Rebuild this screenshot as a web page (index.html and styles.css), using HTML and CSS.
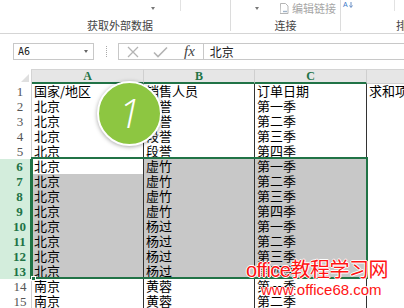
FILE: index.html
```html
<!DOCTYPE html>
<html lang="zh-CN">
<head>
    <meta charset="UTF-8">
    <title>数据透视 - 选择区域</title>
    <link rel="stylesheet" href="styles.css">
</head>
<body>
    <div class="window">
        <!-- 功能区 -->
        <div class="ribbon">
            <div class="group group-data">
                <div class="tools">
                    <span class="caret"></span>
                    <span class="mini-sep"></span>
                </div>
                <div class="group-label">获取外部数据</div>
            </div>
            <div class="group group-conn">
                <div class="tools">
                    <span class="caret"></span>
                    <svg class="doc-icon" width="9" height="11" viewBox="0 0 9 11">
                        <path d="M0.5 0.5h5l2.5 2.5v7.5h-8z" fill="#fff" stroke="#b5b5b5"/>
                        <path d="M3 8.5h4" stroke="#9fb3c8" stroke-width="1.4"/>
                    </svg>
                    <span class="tool-text">编辑链接</span>
                </div>
                <div class="group-label">连接</div>
            </div>
            <div class="group group-sort">
                <div class="tools">
                    <span class="sort-icon">A</span>
                    <svg width="4" height="6" viewBox="0 0 4 6">
                        <path d="M2 0v5M0.5 3.5L2 5.5L3.5 3.5" fill="none" stroke="#6b8fc4"/>
                    </svg>
                    <span class="mini-sep"></span>
                </div>
            </div>
            <div class="group group-next">
                <div class="tools"></div>
                <div class="group-label">排序和筛选</div>
            </div>
        </div>

        <!-- 编辑栏 -->
        <div class="formula-bar">
            <div class="name-box">
                <span>A6</span>
                <span class="caret"></span>
            </div>
            <span class="grip"></span>
            <div class="formula-box">
                <svg class="cancel" width="12" height="12" viewBox="0 0 12 12">
                    <path d="M1 1L11 11M11 1L1 11" stroke="#b4b4b4" stroke-width="1.3"/>
                </svg>
                <svg class="enter" width="15" height="12" viewBox="0 0 15 12">
                    <path d="M1 6.5L5 10.5L14 1.5" fill="none" stroke="#b4b4b4" stroke-width="1.6"/>
                </svg>
                <span class="fx">fx</span>
                <span class="formula-text">北京</span>
            </div>
        </div>

        <!-- 工作表 -->
        <div class="sheet">
            <div class="row head">
                <div class="corner"></div>
                <div class="col-head on">A</div>
                <div class="col-head on">B</div>
                <div class="col-head on">C</div>
                <div class="col-head">D</div>
            </div>
            <div class="row">
                <div class="row-head">1</div>
                <div class="cell">国家/地区</div>
                <div class="cell">销售人员</div>
                <div class="cell">订单日期</div>
                <div class="cell">求和项:销售额</div>
            </div>
            <div class="row">
                <div class="row-head">2</div>
                <div class="cell">北京</div>
                <div class="cell">段誉</div>
                <div class="cell">第一季</div>
                <div class="cell"></div>
            </div>
            <div class="row">
                <div class="row-head">3</div>
                <div class="cell">北京</div>
                <div class="cell">段誉</div>
                <div class="cell">第二季</div>
                <div class="cell"></div>
            </div>
            <div class="row">
                <div class="row-head">4</div>
                <div class="cell">北京</div>
                <div class="cell">段誉</div>
                <div class="cell">第三季</div>
                <div class="cell"></div>
            </div>
            <div class="row">
                <div class="row-head">5</div>
                <div class="cell">北京</div>
                <div class="cell">段誉</div>
                <div class="cell">第四季</div>
                <div class="cell"></div>
            </div>
            <div class="row picked">
                <div class="row-head">6</div>
                <div class="cell">北京</div>
                <div class="cell hl">虚竹</div>
                <div class="cell hl">第一季</div>
                <div class="cell"></div>
            </div>
            <div class="row picked">
                <div class="row-head">7</div>
                <div class="cell hl">北京</div>
                <div class="cell hl">虚竹</div>
                <div class="cell hl">第二季</div>
                <div class="cell"></div>
            </div>
            <div class="row picked">
                <div class="row-head">8</div>
                <div class="cell hl">北京</div>
                <div class="cell hl">虚竹</div>
                <div class="cell hl">第三季</div>
                <div class="cell"></div>
            </div>
            <div class="row picked">
                <div class="row-head">9</div>
                <div class="cell hl">北京</div>
                <div class="cell hl">虚竹</div>
                <div class="cell hl">第四季</div>
                <div class="cell"></div>
            </div>
            <div class="row picked">
                <div class="row-head">10</div>
                <div class="cell hl">北京</div>
                <div class="cell hl">杨过</div>
                <div class="cell hl">第一季</div>
                <div class="cell"></div>
            </div>
            <div class="row picked">
                <div class="row-head">11</div>
                <div class="cell hl">北京</div>
                <div class="cell hl">杨过</div>
                <div class="cell hl">第二季</div>
                <div class="cell"></div>
            </div>
            <div class="row picked">
                <div class="row-head">12</div>
                <div class="cell hl">北京</div>
                <div class="cell hl">杨过</div>
                <div class="cell hl">第三季</div>
                <div class="cell"></div>
            </div>
            <div class="row picked">
                <div class="row-head">13</div>
                <div class="cell hl">北京</div>
                <div class="cell hl">杨过</div>
                <div class="cell hl">第四季</div>
                <div class="cell"></div>
            </div>
            <div class="row">
                <div class="row-head">14</div>
                <div class="cell">南京</div>
                <div class="cell">黄蓉</div>
                <div class="cell">第一季</div>
                <div class="cell"></div>
            </div>
            <div class="row">
                <div class="row-head">15</div>
                <div class="cell">南京</div>
                <div class="cell">黄蓉</div>
                <div class="cell">第二季</div>
                <div class="cell"></div>
            </div>

            <!-- 选区边框 -->
            <div class="selection"></div>
            <div class="fill-handle"></div>
        </div>

        <!-- 步骤标记 -->
        <div class="step-badge">1</div>

        <!-- 水印 -->
        <div class="watermark">
            <div class="wm-title">office教程学习网</div>
            <div class="wm-url">www.office68.com</div>
        </div>
    </div>
</body>
</html>
```

FILE: styles.css
```css
* {
    box-sizing: border-box;
}

body {
    margin: 0;
    background-color: #fff;
    font-family: "Noto Sans CJK SC", sans-serif;
}

.window {
    position: relative;
    width: 404px;
    height: 308px;
    overflow: hidden;
}

/* 功能区 */
.ribbon {
    display: flex;
    height: 34px;
    border-bottom: 1px solid #d5d5d5;
}

.group {
    display: flex;
    flex-direction: column;
    flex-shrink: 0;
    height: 31px;
}

.tools {
    display: flex;
    align-items: flex-start;
    height: 19px;
    white-space: nowrap;
}

.group-label {
    font-size: 11px;
    line-height: 12px;
    color: #444;
    text-align: center;
    white-space: nowrap;
}

.caret {
    width: 0;
    height: 0;
    margin-top: 7px;
    border-left: 2.5px solid transparent;
    border-right: 2.5px solid transparent;
    border-top: 3px solid #777;
}

.mini-sep {
    width: 1px;
    height: 11px;
    background-color: #e2e2e2;
}

.group-data {
    width: 231px;
    border-right: 1px solid #dcdcdc;
}

.group-data .tools {
    padding-left: 151px;
}

.group-data .mini-sep {
    margin-left: 25px;
}

.group-data .group-label {
    padding-left: 10px;
}

.group-conn {
    width: 110px;
    border-right: 1px solid #dcdcdc;
}

.group-conn .tools {
    padding-left: 24px;
}

.doc-icon {
    margin: 3px 0 0 21px;
}

.tool-text {
    margin: 1px 0 0 3px;
    font-size: 11px;
    line-height: 14px;
    color: #a6a6a6;
}

.group-sort {
    width: 54px;
}

.group-sort .tools {
    padding-left: 2px;
}

.sort-icon {
    font-family: "Liberation Sans", sans-serif;
    font-size: 7px;
    line-height: 9px;
    color: #3c78c8;
    margin-right: 1px;
}

.group-sort svg {
    margin-top: 2px;
}

.group-sort .mini-sep {
    margin-left: auto;
}

.group-next {
    width: 110px;
}

.group-next .group-label {
    padding-left: 1px;
    text-align: left;
}

/* 编辑栏 */
.formula-bar {
    display: flex;
    align-items: center;
    height: 35px;
    padding-left: 13px;
}

.name-box {
    display: flex;
    align-items: center;
    justify-content: space-between;
    width: 81px;
    height: 17px;
    padding: 0 5px 0 4px;
    border: 1px solid #c8c8c8;
    font-family: "DejaVu Sans Mono", monospace;
    font-size: 10px;
    color: #222;
}

.name-box .caret {
    margin-top: 0;
    border-top-color: #666;
}

.grip {
    width: 1px;
    height: 11px;
    margin-left: 12px;
    border-left: 1px dotted #aaa;
}

.formula-box {
    display: flex;
    align-items: center;
    flex: 1;
    height: 17px;
    margin-left: 11px;
    padding-left: 8px;
    border: 1px solid #c8c8c8;
    border-right: none;
}

.enter {
    margin-left: 14px;
}

.fx {
    margin-left: 16px;
    font-family: "Liberation Serif", serif;
    font-style: italic;
    font-size: 15px;
    color: #444;
}

.formula-text {
    height: 15px;
    margin-left: 8px;
    padding-left: 6px;
    border-left: 1px solid #c8c8c8;
    font-size: 12px;
    line-height: 15px;
    color: #222;
}

/* 工作表 */
.sheet {
    position: relative;
}

.row {
    display: grid;
    grid-template-columns: 32px 112px 111px 112px 112px;
    height: 15px;
}

.corner {
    position: relative;
    background-color: #fff;
    border-right: 1px solid #d4d4d4;
}

.corner::after {
    content: "";
    position: absolute;
    right: 2px;
    bottom: 2px;
    border-left: 8px solid transparent;
    border-bottom: 8px solid #dfdfdf;
}

.col-head {
    background-color: #e6e6e6;
    border-top: 1px solid #d4d4d4;
    border-right: 1px solid #cfcfcf;
    border-bottom: 1px solid #cfcfcf;
    font-family: "Liberation Serif", serif;
    font-size: 12px;
    line-height: 13px;
    text-align: center;
    color: #444;
}

.col-head.on {
    border-bottom: 2px solid #217346;
    color: #217346;
    font-weight: bold;
    line-height: 12px;
}

.row-head {
    background-color: #fff;
    border-right: 1px solid #cfcfcf;
    border-bottom: 1px solid #e4e4e4;
    padding-left: 9px;
    font-family: "Liberation Serif", serif;
    font-size: 13px;
    line-height: 15px;
    text-align: center;
    color: #555;
}

.picked .row-head {
    background-color: #d3eddc;
    border-right: 2px solid #217346;
    border-bottom-color: #c4dfcd;
    color: #217346;
    font-weight: bold;
}

.cell {
    padding-left: 2px;
    background-color: #fff;
    border-right: 1px solid #333;
    border-bottom: 1px solid #6e6e6e;
    overflow: hidden;
    white-space: nowrap;
    font-size: 13px;
    line-height: 14px;
    color: #000;
}

.cell.hl {
    background-color: #c8c8c8;
}

.selection {
    position: absolute;
    left: 31px;
    top: 88px;
    width: 337px;
    height: 122px;
    border: 2px solid #217346;
}

.fill-handle {
    position: absolute;
    left: 31px;
    top: 207px;
    width: 5px;
    height: 5px;
    background-color: #217346;
    border: 1px solid #fff;
}

/* 步骤标记 */
.step-badge {
    position: absolute;
    left: 97px;
    top: 81px;
    width: 65px;
    height: 65px;
    border: 2px solid #fff;
    border-radius: 50%;
    background-color: #8dc641;
    box-shadow: 0 1px 4px rgba(0, 0, 0, 0.35);
    font-family: "Open Sans", sans-serif;
    font-weight: 300;
    font-style: italic;
    font-size: 40px;
    line-height: 60px;
    text-align: center;
    color: #fff;
}

/* 水印 */
.watermark {
    position: absolute;
    left: 246px;
    top: 258px;
    color: #ff1414;
    text-shadow: 1px 0 0 #fff, -1px 0 0 #fff, 0 1px 0 #fff, 0 -1px 0 #fff;
}

.wm-title {
    font-family: "Liberation Sans", "Noto Sans CJK SC", sans-serif;
    font-size: 20px;
    line-height: 24px;
    letter-spacing: -0.5px;
}

.wm-url {
    margin-left: 15px;
    font-family: "Liberation Sans", sans-serif;
    font-size: 15px;
    line-height: 15px;
}
```
